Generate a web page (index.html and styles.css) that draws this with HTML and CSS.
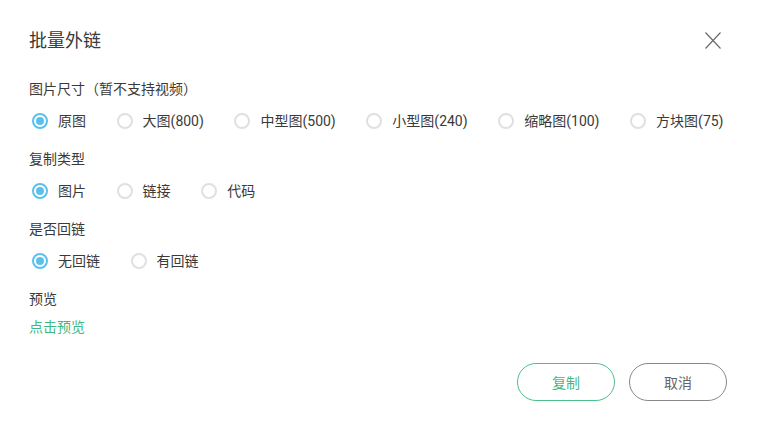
FILE: index.html
```html
<!DOCTYPE html>
<html lang="zh">
  <head>
    <meta charset="UTF-8" />
    <title>批量外链</title>
    <link rel="stylesheet" href="styles.css">
  </head>
  <body>
    <div class="dialog">
      <div class="header">
        <h2>批量外链</h2>
        <span class="close">
          <svg width="16" height="17" viewBox="0 0 16 17">
            <path d="M0.5 0.5 L15.5 16.5 M15.5 0.5 L0.5 16.5" stroke="#666" stroke-width="1.1" fill="none" />
          </svg>
        </span>
      </div>

      <div class="group-label">图片尺寸（暂不支持视频）</div>
      <div class="options">
        <label class="option checked"><span class="radio"></span>原图</label>
        <label class="option"><span class="radio"></span>大图(800)</label>
        <label class="option"><span class="radio"></span>中型图(500)</label>
        <label class="option"><span class="radio"></span>小型图(240)</label>
        <label class="option"><span class="radio"></span>缩略图(100)</label>
        <label class="option"><span class="radio"></span>方块图(75)</label>
      </div>

      <div class="group-label">复制类型</div>
      <div class="options">
        <label class="option checked"><span class="radio"></span>图片</label>
        <label class="option"><span class="radio"></span>链接</label>
        <label class="option"><span class="radio"></span>代码</label>
      </div>

      <div class="group-label">是否回链</div>
      <div class="options">
        <label class="option checked"><span class="radio"></span>无回链</label>
        <label class="option"><span class="radio"></span>有回链</label>
      </div>

      <div class="group-label">预览</div>
      <a class="preview-link" href="#">点击预览</a>

      <div class="footer">
        <button class="btn btn-copy">复制</button>
        <button class="btn btn-cancel">取消</button>
      </div>
    </div>
  </body>
</html>
```

FILE: styles.css
```css
* {
  margin: 0;
  padding: 0;
  box-sizing: border-box;
}

body {
  font-family: "Roboto", "Noto Sans CJK SC", sans-serif;
  font-size: 14px;
  color: #3a3a3a;
  background: #fff;
}

.dialog {
  width: 759px;
  padding: 24px 32px 0 29px;
}

.header {
  display: flex;
  align-items: center;
  justify-content: space-between;
  height: 34px;
}

.header h2 {
  font-size: 18px;
  font-weight: normal;
  line-height: 34px;
  color: #3a3a3a;
}

.close {
  display: flex;
  margin-right: 6px;
  margin-top: -2px;
  cursor: pointer;
}

.group-label {
  line-height: 20px;
  margin-top: 18px;
}

.header + .group-label {
  margin-top: 21px;
}

.options {
  display: flex;
  align-items: center;
  margin-top: 12px;
  padding-left: 3px;
  line-height: 20px;
  white-space: nowrap;
}

.option {
  display: flex;
  align-items: center;
  flex-shrink: 0;
  margin-right: 30.6px;
  cursor: pointer;
}

.option:last-child {
  margin-right: 0;
}

.radio {
  flex-shrink: 0;
  width: 16px;
  height: 16px;
  border: 2px solid #e0e0e0;
  border-radius: 50%;
  margin-right: 10px;
  position: relative;
}

.option.checked .radio {
  border-color: #5bc0eb;
}

.option.checked .radio::after {
  content: "";
  position: absolute;
  left: 2px;
  top: 2px;
  width: 8px;
  height: 8px;
  border-radius: 50%;
  background: #5bc0eb;
}

.preview-link {
  display: block;
  margin-top: 8px;
  line-height: 20px;
  color: #3fb97f;
  text-decoration: none;
}

.footer {
  display: flex;
  justify-content: flex-end;
  gap: 14px;
  margin-top: 26px;
}

.btn {
  width: 98px;
  height: 38px;
  border-radius: 19px;
  background: #fff;
  font-family: inherit;
  font-size: 14px;
  cursor: pointer;
}

.btn-copy {
  border: 1px solid #4cc08a;
  color: #3fb97f;
}

.btn-cancel {
  border: 1px solid #888;
  color: #666;
}
```
